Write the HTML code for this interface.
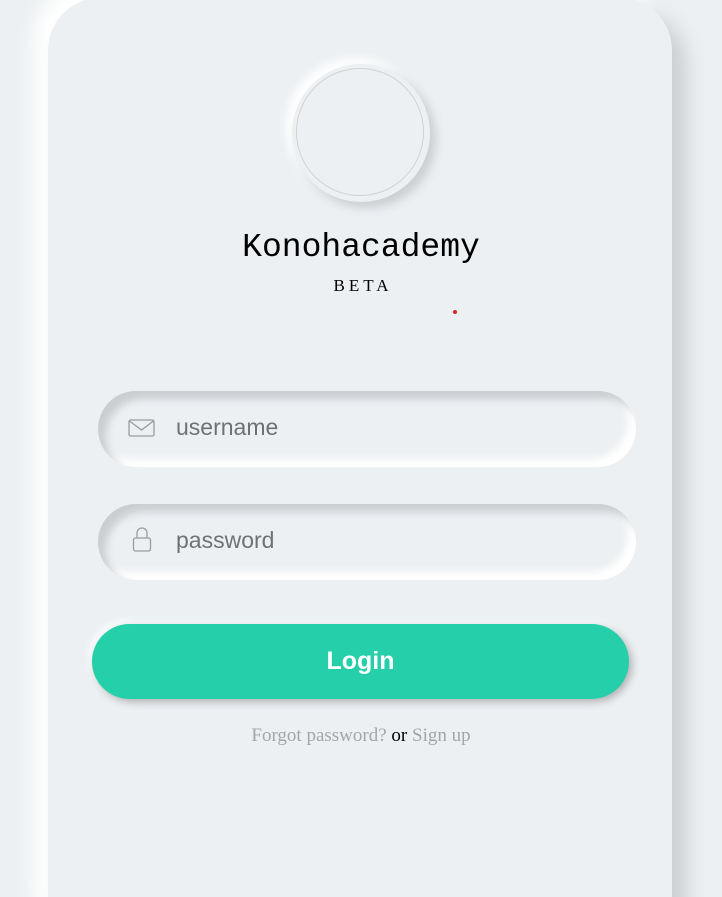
<!DOCTYPE html>
<html><head><style>
html,body{margin:0;padding:0;width:722px;height:897px;overflow:hidden;background:#ecf0f3;}
.wrap{position:relative;width:722px;height:897px;overflow:hidden;}
.card{position:absolute;left:48px;top:-2px;width:624px;height:960px;background:#ecf0f3;border-radius:52px;box-shadow:14px 14px 20px #cbced1,-14px -14px 20px #fff;}
.av{position:absolute;left:292px;top:64px;width:138px;height:138px;border-radius:50%;background:#ecf0f3;box-shadow:6px 6px 10px #cbced1,-6px -6px 10px #fff;}
.av i{position:absolute;left:4px;top:4px;width:126px;height:126px;border-radius:50%;border:1px solid #cfd2d5;}
.t{position:absolute;left:0;width:722px;text-align:center;}
.inp{position:absolute;left:98px;width:538px;height:76px;border-radius:38px;background:#ecf0f3;box-shadow:inset 8px 8px 8px #cbced1,inset -8px -8px 8px #fff;}
.inp span{position:absolute;left:78px;top:23px;font:23px "Liberation Sans",sans-serif;color:#6f7275;}
.btn{position:absolute;left:92px;top:624px;width:537px;height:75px;border-radius:38px;background:#24cfaa;box-shadow:3px 3px 8px #b1b1b1,-3px -3px 8px #fff;color:#fff;font:bold 25px "Liberation Sans",sans-serif;text-align:center;line-height:75px;}
</style></head><body><div class="wrap">
<div class="card"></div>
<div class="av"><i></i></div>
<div class="t" style="top:229px;font:33px 'Liberation Mono',monospace;color:#000;">Konohacademy</div>
<div class="t" style="top:276px;font:17px 'Liberation Serif',serif;letter-spacing:4px;padding-left:4px;box-sizing:border-box;">BETA</div>
<div style="position:absolute;left:453px;top:310px;width:4px;height:4px;border-radius:50%;background:#e02020;"></div>
<div class="inp" style="top:391px;">
<svg style="position:absolute;left:30px;top:28px" width="28" height="20" viewBox="0 0 28 20"><rect x="1" y="1" width="25" height="16" rx="1.5" fill="none" stroke="#9a9c9e" stroke-width="1.3"/><path d="M1.5 2 L13.5 11 L25.5 2" fill="none" stroke="#9a9c9e" stroke-width="1.3"/></svg>
<span>username</span></div>
<div class="inp" style="top:504px;">
<svg style="position:absolute;left:34px;top:22px" width="20" height="28" viewBox="0 0 20 28"><path d="M5 12 V7 a5 5 0 0 1 10 0 V12" fill="none" stroke="#9a9c9e" stroke-width="1.3"/><rect x="1.5" y="12" width="17" height="13" rx="2" fill="none" stroke="#9a9c9e" stroke-width="1.3"/></svg>
<span>password</span></div>
<div class="btn">Login</div>
<div class="t" style="top:725px;font:19px 'Liberation Serif',serif;color:#a3a6a9;">Forgot password? <span style="color:#000">or</span> Sign up</div>
</div></body></html>
